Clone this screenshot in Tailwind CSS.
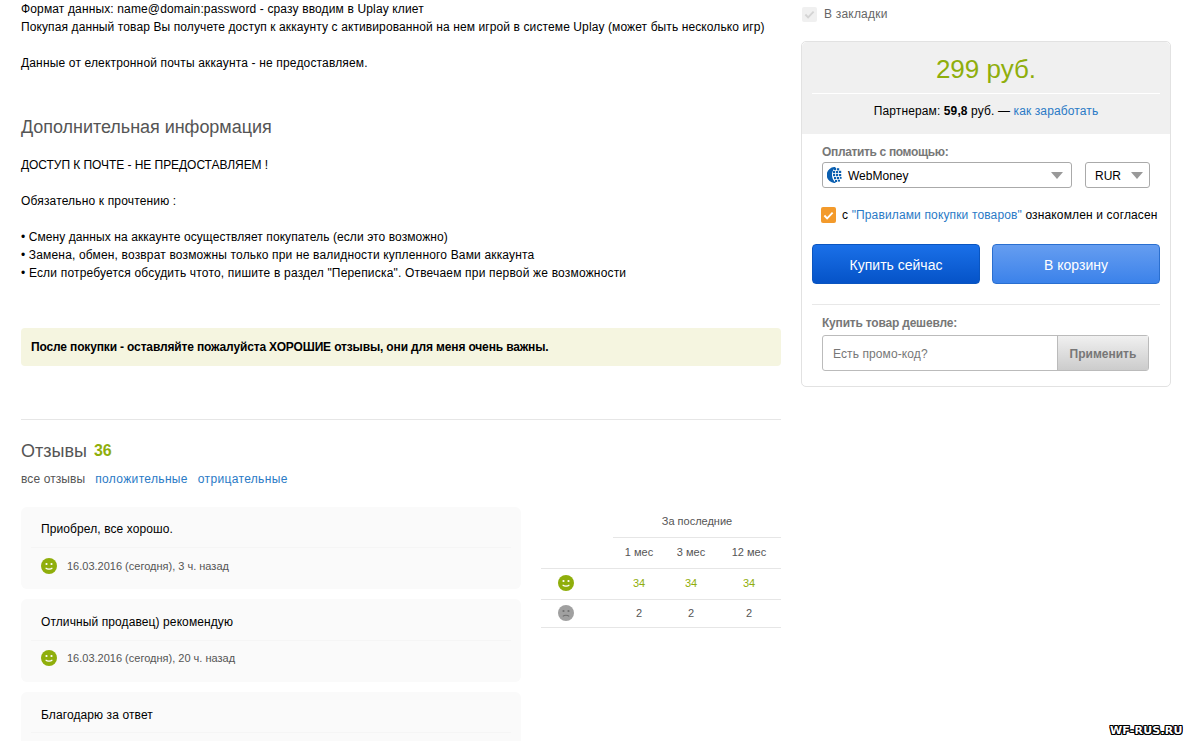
<!DOCTYPE html>
<html lang="ru">
<head>
  <meta charset="UTF-8">
  <title>Отзывы</title>
  <script src="https://cdn.jsdelivr.net/npm/@tailwindcss/browser@4"></script>
</head>
<body class="bg-white">
<div class="relative h-[741px] w-[1189px] overflow-hidden font-['Liberation_Sans',Arial,sans-serif] text-[12px] leading-[18px] text-black">
  <div class="flex gap-5 pl-[21px]">

    <!-- описание и отзывы -->
    <div class="w-[760px] shrink-0">
      <p class="tracking-[0.14px]">Формат данных: name@domain:password - сразу вводим в Uplay клиет</p>
      <p class="tracking-[0.104px]">Покупая данный товар Вы получете доступ к аккаунту с активированной на нем игрой в системе Uplay (может быть несколько игр)</p>
      <p class="mt-[18px] tracking-[0.16px]">Данные от електронной почты аккаунта - не предоставляем.</p>

      <h2 class="mt-[43px] text-[18px] leading-[24px] tracking-[-0.04px] text-[#555555]">Дополнительная информация</h2>

      <p class="mt-[17px] tracking-[-0.055px]">ДОСТУП К ПОЧТЕ - НЕ ПРЕДОСТАВЛЯЕМ !</p>
      <p class="mt-[18px] tracking-[0.16px]">Обязательно к прочтению :</p>
      <p class="mt-[18px] tracking-[0.086px]">• Смену данных на аккаунте осуществляет покупатель (если это возможно)</p>
      <p class="tracking-[0.16px]">• Замена, обмен, возврат возможны только при не валидности купленного Вами аккаунта</p>
      <p class="tracking-[0.18px]">• Если потребуется обсудить чтото, пишите в раздел "Переписка". Отвечаем при первой же возможности</p>

      <div class="mt-[46px] flex h-[38px] items-center rounded-[4px] bg-[#f5f5e0] px-[10px] font-bold tracking-[-0.15px]">После покупки - оставляйте пожалуйста ХОРОШИЕ отзывы, они для меня очень важны.</div>

      <div class="mt-[53px] border-t border-[#e6e6e6] pt-[20px]">
        <div class="flex items-center gap-[7px] leading-[22px]">
          <span class="text-[18px] text-[#555555]">Отзывы</span>
          <span class="text-[16px] font-bold text-[#8fae0b]">36</span>
        </div>
        <div class="mt-[8px] flex gap-[10px] tracking-[0.34px] text-[#555555]">
          <span class="tracking-[0.1px]">все отзывы</span>
          <a class="text-[#2a7ac6]">положительные</a>
          <a class="text-[#2a7ac6]">отрицательные</a>
        </div>
      </div>

      <div class="mt-[19px] flex gap-5">
        <div class="flex w-[500px] shrink-0 flex-col gap-[10px]">
          <div class="rounded-[6px] bg-[#fafafa] px-[10px]">
            <div class="border-b border-[#f5f5f5] px-[10px] pt-[13px] pb-[9px] tracking-[0.1px]">Приобрел, все хорошо.</div>
            <div class="flex h-[41px] items-center gap-[10px] px-[10px] pb-[5px] text-[11px] text-[#555555]">
              <svg class="h-4 w-4" viewBox="0 0 16 16"><circle cx="8" cy="8" r="8" fill="#8fae0b"/><circle cx="5.5" cy="6" r="1.1" fill="#fff"/><circle cx="10.5" cy="6" r="1.1" fill="#fff"/><path d="M4.6 9.8c1.6 1.8 5.2 1.8 6.8 0" fill="none" stroke="#fff" stroke-width="1.1"/></svg>
              <span>16.03.2016 (сегодня), 3 ч. назад</span>
            </div>
          </div>
          <div class="rounded-[6px] bg-[#fafafa] px-[10px]">
            <div class="border-b border-[#f5f5f5] px-[10px] pt-[14px] pb-[9px] tracking-[0.1px]">Отличный продавец) рекомендую</div>
            <div class="flex h-[41px] items-center gap-[10px] px-[10px] pb-[7px] text-[11px] text-[#555555]">
              <svg class="h-4 w-4" viewBox="0 0 16 16"><circle cx="8" cy="8" r="8" fill="#8fae0b"/><circle cx="5.5" cy="6" r="1.1" fill="#fff"/><circle cx="10.5" cy="6" r="1.1" fill="#fff"/><path d="M4.6 9.8c1.6 1.8 5.2 1.8 6.8 0" fill="none" stroke="#fff" stroke-width="1.1"/></svg>
              <span>16.03.2016 (сегодня), 20 ч. назад</span>
            </div>
          </div>
          <div class="rounded-[6px] bg-[#fafafa] px-[10px]">
            <div class="border-b border-[#f5f5f5] px-[10px] pt-[14px] pb-[8px] tracking-[0.1px]">Благодарю за ответ</div>
            <div class="h-[41px]"></div>
          </div>
        </div>

        <!-- статистика -->
        <div class="w-[240px] shrink-0 text-[11px] text-[#555555]">
          <div class="ml-[72px] flex h-[31px] items-center justify-center border-b border-[#e6e6e6] pb-[3px]">За последние</div>
          <div class="flex h-[31px] items-center border-b border-[#e6e6e6] pb-[3px] text-center">
            <span class="w-[72px]"></span><span class="w-[52px]">1 мес</span><span class="w-[52px]">3 мес</span><span class="w-[64px]">12 мес</span>
          </div>
          <div class="flex h-[31px] items-center border-b border-[#e6e6e6] pb-[2px] text-center text-[#8fae0b]">
            <span class="flex w-[50px] justify-center"><svg class="h-4 w-4" viewBox="0 0 16 16"><circle cx="8" cy="8" r="8" fill="#8fae0b"/><circle cx="5.5" cy="6" r="1.1" fill="#fff"/><circle cx="10.5" cy="6" r="1.1" fill="#fff"/><path d="M4.6 9.8c1.6 1.8 5.2 1.8 6.8 0" fill="none" stroke="#fff" stroke-width="1.1"/></svg></span>
            <span class="w-[22px]"></span><span class="w-[52px]">34</span><span class="w-[52px]">34</span><span class="w-[64px]">34</span>
          </div>
          <div class="flex h-[28px] items-center border-b border-[#e6e6e6] pb-[1px] text-center">
            <span class="flex w-[50px] justify-center"><svg class="h-4 w-4" viewBox="0 0 16 16"><circle cx="8" cy="8" r="8" fill="#a0a0a0"/><circle cx="5.5" cy="6" r="1.1" fill="#707070"/><circle cx="10.5" cy="6" r="1.1" fill="#707070"/><path d="M4.8 11.4c1.6-1.6 4.8-1.6 6.4 0" fill="none" stroke="#707070" stroke-width="1.1"/></svg></span>
            <span class="w-[22px]"></span><span class="w-[52px]">2</span><span class="w-[52px]">2</span><span class="w-[64px]">2</span>
          </div>
        </div>
      </div>
    </div>

    <!-- покупка -->
    <div class="w-[370px] shrink-0">
      <div class="flex h-[41px] items-start gap-[7px] pt-[7px] pl-px tracking-[0.2px] text-[#666666]">
        <span class="flex h-[15px] w-[15px] items-center justify-center rounded-[2px] bg-[#f0f0f0]">
          <svg class="h-[11px] w-[11px]" viewBox="0 0 12 12"><path d="M1.5 6l3 3.2 6-6.4" fill="none" stroke="#d4d4d4" stroke-width="2"/></svg>
        </span>
        <span class="leading-[15px]">В закладки</span>
      </div>

      <div class="h-[346px] rounded-[5px] border border-[#e2e2e2]">
        <div class="h-[92px] rounded-t-[5px] bg-[#f0f0f0] px-[10px]">
          <div class="flex h-[52px] items-center justify-center border-b border-white pt-[2px] text-[26px] text-[#8fae0b]">299 руб.</div>
          <div class="pt-[8px] text-center tracking-[0.12px]">Партнерам: <b>59,8</b> руб. — <a class="text-[#2a7ac6]">как заработать</a></div>
        </div>

        <div class="px-[20px] pt-[9px]">
          <div class="font-bold leading-[18px] tracking-[-0.35px] text-[#777777]">Оплатить с помощью:</div>
          <div class="mt-[1px] flex gap-[13px]">
            <div class="flex h-[26px] w-[250px] items-center gap-[5px] rounded-[3px] border border-[#aaaaaa] pr-[8px] pl-[4px]">
              <svg class="h-4 w-4 shrink-0" viewBox="0 0 16 16"><path d="M9 .1A8 8 0 1 0 9 15.9 10 10 0 0 1 5 8 10 10 0 0 1 9 .1z" fill="#0b5fb0"/><g fill="#0b5fb0"><rect x="7" y="1" width="2.2" height="2.2"/><rect x="10" y="1.2" width="2.2" height="2.2"/><rect x="6" y="4" width="2.2" height="2.2"/><rect x="9" y="4" width="2.2" height="2.2"/><rect x="12" y="3.8" width="2.2" height="2.2"/><rect x="6" y="7" width="2.2" height="2.2"/><rect x="9" y="7" width="2.2" height="2.2"/><rect x="12" y="7" width="2.2" height="2.2"/><rect x="7" y="10" width="2.2" height="2.2"/><rect x="10" y="10" width="2.2" height="2.2"/><rect x="13" y="10" width="1.6" height="1.8"/><rect x="8" y="13" width="2.2" height="2"/><rect x="11" y="12.8" width="2" height="1.8"/></g></svg>
              <span class="pt-[2px]">WebMoney</span>
              <span class="ml-auto h-0 w-0 border-x-[6px] border-t-[7px] border-x-transparent border-t-[#999999]"></span>
            </div>
            <div class="flex h-[26px] w-[65px] items-center justify-between rounded-[3px] border border-[#aaaaaa] pr-[6px] pl-[9px]">
              <span class="pt-[2px]">RUR</span>
              <span class="h-0 w-0 border-x-[6px] border-t-[7px] border-x-transparent border-t-[#999999]"></span>
            </div>
          </div>
          <div class="mt-[18px] -ml-px flex items-center gap-[6px] whitespace-nowrap tracking-[0.14px]">
            <span class="flex h-[16px] w-[15px] shrink-0 items-center justify-center rounded-[2px] bg-[#f39a2b]">
              <svg class="h-[11px] w-[11px]" viewBox="0 0 12 12"><path d="M1.5 6l3 3.2 6-6.4" fill="none" stroke="#fff" stroke-width="2"/></svg>
            </span>
            <span>с <a class="text-[#2a7ac6]">"Правилами покупки товаров"</a> ознакомлен и согласен</span>
          </div>
        </div>

        <div class="mx-[10px] mt-[20px] flex gap-[12px] border-b border-[#e8e8e8] pb-[20px]">
          <button class="h-[40px] w-[168px] rounded-[4px] border border-[#0a55c0] bg-linear-to-b from-[#1a70e8] to-[#0553c8] pt-[2px] text-[14px] text-white">Купить сейчас</button>
          <button class="h-[40px] w-[168px] rounded-[4px] border border-[#2a6fd0] bg-linear-to-b from-[#659df0] to-[#3b82ea] pt-[2px] text-[14px] text-white">В корзину</button>
        </div>

        <div class="px-[20px] pt-[9px]">
          <div class="font-bold leading-[18px] tracking-[-0.2px] text-[#777777]">Купить товар дешевле:</div>
          <div class="mt-[3px] flex h-[36px] w-[327px] rounded-[3px] border border-[#bbbbbb]">
            <div class="flex flex-1 items-center pt-[2px] pl-[10px] tracking-[0.1px] text-[#777777]">Есть промо-код?</div>
            <div class="flex w-[91px] items-center justify-center border-l border-[#bbbbbb] bg-linear-to-b from-[#f0f0f0] to-[#cccccc] pt-[2px] font-bold text-[#777777]">Применить</div>
          </div>
        </div>
      </div>
    </div>
  </div>

  <!-- водяной знак -->
  <div class="absolute top-[723px] left-[1110px] font-['DejaVu_Sans',sans-serif] text-[11px] font-bold leading-[16px] tracking-[0.2px] text-white [text-shadow:1px_0_0_#000,-1px_0_0_#000,0_1px_0_#000,0_-1px_0_#000,1px_1px_0_#000,-1px_-1px_0_#000,1px_-1px_0_#000,-1px_1px_0_#000]">WF-RUS.RU</div>
</div>
</body>
</html>
